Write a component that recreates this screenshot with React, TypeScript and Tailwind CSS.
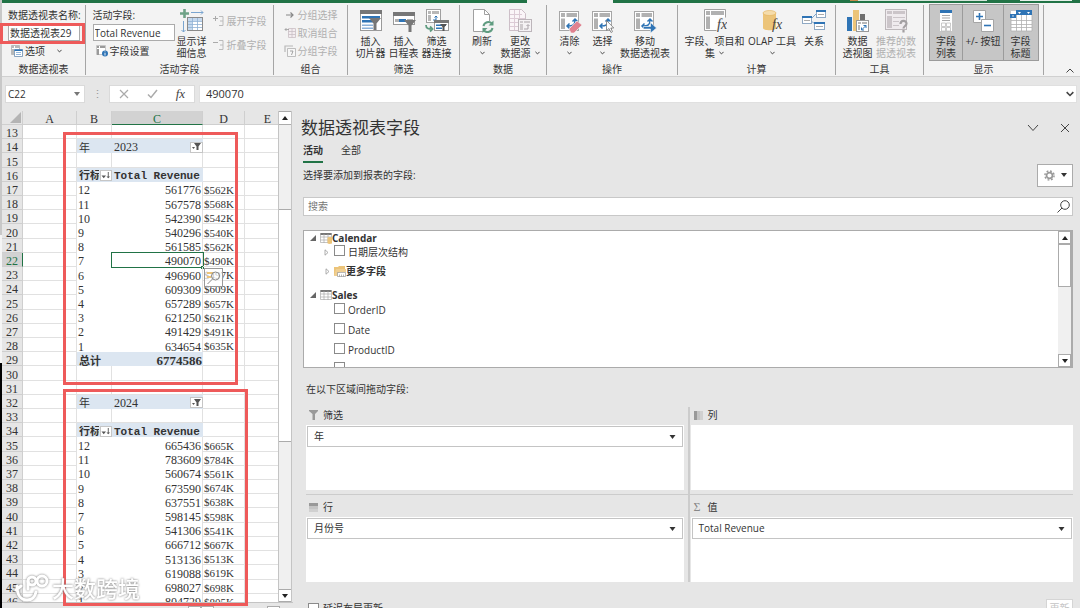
import React from 'react';

interface IconProps {
	className?: string;
}

interface BigButtonProps {
	icon: React.ReactNode;
	lines: string[];
	width: string;
	menu?: boolean;
	disabled?: boolean;
	pressed?: boolean;
}

interface PivotItem {
	month: string;
	total: string;
	short: string;
}

const pivot2023: PivotItem[] = [
	{ month: '12', total: '561776', short: '$562K' },
	{ month: '11', total: '567578', short: '$568K' },
	{ month: '10', total: '542390', short: '$542K' },
	{ month: '9', total: '540296', short: '$540K' },
	{ month: '8', total: '561585', short: '$562K' },
	{ month: '7', total: '490070', short: '$490K' },
	{ month: '6', total: '496960', short: '$497K' },
	{ month: '5', total: '609309', short: '$609K' },
	{ month: '4', total: '657289', short: '$657K' },
	{ month: '3', total: '621250', short: '$621K' },
	{ month: '2', total: '491429', short: '$491K' },
	{ month: '1', total: '634654', short: '$635K' },
];

const pivot2024: PivotItem[] = [
	{ month: '12', total: '665436', short: '$665K' },
	{ month: '11', total: '783609', short: '$784K' },
	{ month: '10', total: '560674', short: '$561K' },
	{ month: '9', total: '673590', short: '$674K' },
	{ month: '8', total: '637551', short: '$638K' },
	{ month: '7', total: '598145', short: '$598K' },
	{ month: '6', total: '541306', short: '$541K' },
	{ month: '5', total: '666712', short: '$667K' },
	{ month: '4', total: '513136', short: '$513K' },
	{ month: '3', total: '619088', short: '$619K' },
	{ month: '2', total: '698027', short: '$698K' },
	{ month: '1', total: '804729', short: '$805K' },
];

/* ---------- icons ---------- */

const Chevron: React.FC<IconProps> = ({ className }) => (
	<svg className={className ?? 'w-[5px] h-[4px]'} viewBox="0 0 6 4" fill="none" stroke="#444" strokeWidth="1.2">
		<path d="M.5 .6 3 3.1 5.5 .6" />
	</svg>
);

const Caret: React.FC<IconProps> = ({ className }) => (
	<svg className={className ?? 'w-[6px] h-[4px]'} viewBox="0 0 6 4" fill="currentColor">
		<path d="M0 0h6L3 4z" />
	</svg>
);

const CaretUp: React.FC = () => (
	<svg className="w-[6px] h-[4px]" viewBox="0 0 6 4" fill="#222">
		<path d="M0 4h6L3 0z" />
	</svg>
);

const PivotBase: React.FC = () => (
	<g>
		<rect x="1.5" y="2.5" width="19" height="19" fill="#fff" stroke="#a6a6a6" />
		<path d="M3 4h4v4H3zM8.500 4H19v4H8.500zM3 9.500h4V20H3z" fill="#b1b1b1" />
		<path d="M10 17c5 0 7-1 7-6M14.500 12.500 17 10l2.500 2.500M11.500 14.500 9 17l2.500 2.500" fill="none" stroke="#2f74b5" strokeWidth="1.500" />
	</g>
);

const Funnel: React.FC<{ x: number; y: number }> = ({ x, y }) => (
	<path transform={`translate(${x} ${y})`} d="M0 0h12L7.500 5.500V12h-3V5.500z" fill="#777" />
);

const BigSvg: React.FC<{ children: React.ReactNode }> = ({ children }) => (
	<svg className="w-[24px] h-[24px]" viewBox="0 0 24 24">
		{children}
	</svg>
);

const ShowDetailIcon = () => (
	<BigSvg>
		<path d="M4.500 0v9M0 4.500h9" stroke="#6fa287" strokeWidth="2.600" />
		<path d="M11 3.500h12M21 1.500l2 2-2 2M3.500 12v11M1.500 21l2 2 2-2" stroke="#7aa5d0" fill="none" />
		<rect x="7.500" y="8.500" width="15" height="13" fill="#fff" stroke="#8a8a8a" />
		<path d="M8 9h4v12H8zM8 9h14v3H8z" fill="#c5d9ee" />
		<path d="M12.500 9v12M17.500 9v12M8 12.500h14M8 15.500h14M8 18.500h14" stroke="#8fb1d4" strokeWidth=".8" />
	</BigSvg>
);

const SlicerIcon = () => (
	<BigSvg>
		<rect x="1.500" y="1.500" width="21" height="20" fill="#fff" stroke="#9a9a9a" />
		<path d="M1 1h22v4H1z" fill="#777" />
		<path d="M3 7h18v2.500H3zM3 11h12v2.500H3z" fill="#2f74b5" />
		<path d="M3 15.500h11v1.500H3zM3 18.500h11v1.500H3z" fill="#8ab0d8" />
		<Funnel x={10} y={9} />
	</BigSvg>
);

const TimelineIcon = () => (
	<BigSvg>
		<rect x="1.500" y="3.500" width="21" height="12" fill="#fff" stroke="#9a9a9a" />
		<path d="M1 3h22v4H1z" fill="#777" />
		<path d="M3 10h4v3H3zM15 10h6v2h-6z" fill="#b1b1b1" />
		<path d="M7 10h7v3H7z" fill="#2f74b5" />
		<Funnel x={12} y={11} />
	</BigSvg>
);

const FilterLinkIcon = () => (
	<BigSvg>
		<rect x="1.500" y=".5" width="14" height="13" fill="#fff" stroke="#a0a0a0" />
		<path d="M3 2h3v3H3zM7 2h7v3H7zM3 6h3v6H3z" fill="#b8b8b8" />
		<path d="M8 11h3V7M9.500 8.500 11 7l1.500 1.500" stroke="#2f74b5" fill="none" />
		<rect x="9.500" y="11.500" width="14" height="10" fill="#fff" stroke="#9a9a9a" />
		<path d="M9 11h15v3H9z" fill="#777" />
		<path d="M11 15.500h10v1.500H11zM11 18.500h6v1.500h-6z" fill="#2f74b5" />
		<path d="M15 15h7l-2.500 3v4h-2v-4z" fill="#555" />
		<path d="M1 16c0 4 3 4 6 4M5 17.500 7.500 20 5 22.500" stroke="#5f9c80" strokeWidth="1.800" fill="none" />
	</BigSvg>
);

const RefreshIcon = () => (
	<BigSvg>
		<path d="M3.500 .5h11l5 5v17h-16z" fill="#fff" stroke="#a0a0a0" />
		<path d="M14.500 .5v5h5" fill="none" stroke="#a0a0a0" />
		<circle cx="18" cy="18" r="6" fill="#f3f3f3" />
		<path d="M13.500 17a5 5 0 0 1 8.500-2.500M22.500 19a5 5 0 0 1-8.500 2.500" stroke="#5f9c80" strokeWidth="2" fill="none" />
		<path d="M23.500 11.500v5h-5zM12.500 24v-5h5z" fill="#5f9c80" />
	</BigSvg>
);

const ChangeSourceIcon = () => (
	<BigSvg>
		<path d="M1.500 .5h12l4 4v17h-16z" fill="#faf5f8" stroke="#cdbfc8" />
		<path d="M2 5.500h12M2 9.500h15M2 13.500h12M2 17.500h12M6.500 1v20M11.500 1v20" stroke="#dccbd6" />
		<rect x="10.500" y="10.500" width="13" height="12" fill="#f5f2f4" stroke="#bcb5ba" />
		<path d="M12 12h3v2h-3zM16 12h6v2h-6zM12 15h3v6h-3z" fill="#cfcacd" />
		<path d="M16 20h4v-4M18.500 17l1.500-1.500 1.500 1.500" stroke="#a9a2a8" fill="none" />
	</BigSvg>
);

const ClearIcon = () => (
	<BigSvg>
		<PivotBase />
		<path d="m11 20 8-8 5 4-8 8h-3z" fill="#e0818f" stroke="#f3f3f3" strokeWidth=".6" />
	</BigSvg>
);

const SelectIcon = () => (
	<BigSvg>
		<PivotBase />
		<path d="M15.500 11.500v10l2.500-2 2 4 1.500-.8-1.700-3.700h3z" fill="#fff" stroke="#777" strokeWidth=".8" />
	</BigSvg>
);

const MoveIcon = () => (
	<BigSvg>
		<PivotBase />
		<path d="M10.500 17.500h7v-4l6 5.500-6 5v-4h-7z" fill="#2f74b5" stroke="#f3f3f3" strokeWidth=".6" />
	</BigSvg>
);

const FxMark: React.FC<{ x: number }> = ({ x }) => (
	<text x={x} y="20" fontFamily="Liberation Serif, serif" fontStyle="italic" fontSize="14" fill="#444">
		fx
	</text>
);

const FieldsIcon = () => (
	<BigSvg>
		<path d="M1.500 .5h21v21h-21z" fill="#fff" stroke="#a0a0a0" />
		<path d="M3 2h4v4H3zM8 2h13v4H8zM3 7.500h4V20H3z" fill="#b1b1b1" />
		<path d="M16 8.500h8V24h-11z" fill="#f3f3f3" />
		<FxMark x={14} />
	</BigSvg>
);

const OlapIcon = () => (
	<BigSvg>
		<path d="M3 4v15c0 3 13 3 13 0V4z" fill="#ecc479" />
		<ellipse cx="9.500" cy="4" rx="6.500" ry="2.500" fill="#f5dcab" stroke="#e3b25a" strokeWidth=".6" />
		<FxMark x={12} />
	</BigSvg>
);

const RelationIcon = () => (
	<BigSvg>
		<path d="M9 10 15 4M9 12l7 5" stroke="#7aa5d0" fill="none" />
		<g fill="#fff" stroke="#8fa9c4">
			<rect x=".5" y="7.500" width="9" height="7" />
			<rect x="14.500" y="1.500" width="9" height="7" />
			<rect x="12.500" y="13.500" width="10" height="7" />
		</g>
		<path d="M0 7h10v2H0zM14 1h10v2H14zM12 13h11v2H12z" fill="#2f74b5" />
		<path d="M2 11.500h6M16 5.500h6M14 17.500h7" stroke="#aaa" />
	</BigSvg>
);

const PivotChartIcon = () => (
	<BigSvg>
		<path d="M1 8h5v14H1z" fill="#2f74b5" />
		<path d="M7 1h6v21H7z" fill="#ecc479" />
		<path d="M14 5h5v7h-5z" fill="#6f6f6f" />
		<rect x="10.500" y="11.500" width="12" height="11" fill="#fff" stroke="#999" />
		<path d="M12 13h3v2h-3zM16 13h5v2h-5zM12 16h2v5h-2z" fill="#b8b8b8" />
		<path d="M15.500 21 20 16.500M17.500 16.500H20V19M15.500 18.500V21H18" stroke="#2f74b5" fill="none" />
	</BigSvg>
);

const RecommendIcon = () => (
	<BigSvg>
		<rect x="1.500" y=".5" width="21" height="20" fill="#efebee" stroke="#bdb8bb" />
		<path d="M3 2h5v3H3zM9 2h12v3H9zM3 7h5v12H3z" fill="#cbc5c9" />
		<path d="M9 8.500h12M9 12.500h6M9 16.500h6" stroke="#cbc5c9" />
		<path d="M16.500 15c0-4 6-4 6-.5 0 2.500-3 2.500-3 5M19.500 21v2.500" stroke="#a3a0a2" strokeWidth="2.200" fill="none" />
	</BigSvg>
);

const FieldListIcon = () => (
	<BigSvg>
		<path d="M6 1h12v21H6z" fill="#fff" />
		<path d="M6 1h12v3H6z" fill="#2f74b5" />
		<path d="M8 6h8v1H8zM8 8.500h8v1H8zM8 11h8v1H8z" fill="#aaa" />
		<path d="M7.500 14h4v3.500h-4zM12.500 14h4v3.500h-4zM7.500 18.500h4V22h-4zM12.500 18.500h4V22h-4z" fill="none" stroke="#b5b5b5" strokeWidth=".7" />
	</BigSvg>
);

const PlusMinusIcon = () => (
	<BigSvg>
		<path d="M2.500 1.500h12v12h-12z" fill="#fff" stroke="#a5a5a5" />
		<path d="M8.500 4v7M5 7.500h7" stroke="#2f74b5" strokeWidth="1.600" />
		<path d="M10.500 10.500h12v12h-12z" fill="#fff" stroke="#a5a5a5" />
		<path d="M13 16.500h7" stroke="#2f74b5" strokeWidth="1.600" />
	</BigSvg>
);

const HeadersIcon = () => (
	<BigSvg>
		<path d="M2 2h21v20H2z" fill="#fff" />
		<path d="M2 8v14h21V5M7.500 2v20M12.500 5v17M17.500 5v17M2 11.500h21M2 15.500h21M2 18.500h21" stroke="#b0b0b0" fill="none" strokeWidth=".8" />
		<path d="M7 1h16v5H7zM1 5h6v4H1z" fill="#2f74b5" />
		<path d="m9 3 1.500 2L12 3zM18 3l1.500 2L21 3zM3 6.500 4 8l1-1.500z" fill="#fff" />
	</BigSvg>
);

const SmallSvg: React.FC<{ children: React.ReactNode }> = ({ children }) => (
	<svg className="w-[12px] h-[12px] shrink-0" viewBox="0 0 12 12">
		{children}
	</svg>
);

const OptionsIcon = () => (
	<SmallSvg>
		<path d="M.5 .5h8v9h-8z" fill="#fff" stroke="#aaa" strokeWidth=".8" />
		<path d="M1 1h2v2H1zM4 1h4v2H4zM1 4h2v5H1z" fill="#b8b8b8" />
		<path d="M3.500 4.500h8v7h-8z" fill="#fff" stroke="#6b8db0" strokeWidth=".8" />
		<path d="M3.500 4.500h8V6h-8z" fill="#2f74b5" />
		<path d="M5 7.500h5M5 9.500h5" stroke="#7aa5d0" strokeWidth=".8" />
	</SmallSvg>
);

const FieldSettingsIcon = () => (
	<SmallSvg>
		<path d="M.5 .5h9v9h-9z" fill="#fff" stroke="#bbb" strokeWidth=".8" />
		<path d="M1 1h2v2H1zM4 1h5v2H4zM1 4h2v6H1z" fill="#9a9a9a" />
		<circle cx="9" cy="8.500" r="3" fill="#2f74b5" />
		<path d="M9 8v2.500M9 6.500v.8" stroke="#fff" strokeWidth=".9" />
	</SmallSvg>
);

const ExpandIcon = ({ plus }: { plus: boolean }) => (
	<SmallSvg>
		<path d={plus ? 'M0 3.500h5M2.500 1v5' : 'M0 3.500h5'} stroke="#aaa" fill="none" />
		<path d="M6 1.500h4v9H6M7 6h3" stroke="#bbb" fill="none" />
	</SmallSvg>
);

const GroupArrowIcon = () => (
	<SmallSvg>
		<path d="M2 6h7M6.500 3.500 9 6 6.500 8.500" stroke="#888" strokeWidth="1.200" fill="none" />
	</SmallSvg>
);

const UngroupIcon = () => (
	<SmallSvg>
		<path d="M4.500 1.500h7v9h-7zM8 1.500v9M4.500 4.500h7M4.500 7.500h7" stroke="#c9bfc5" fill="#f3edf0" strokeWidth=".8" />
		<path d="M5 2.500H1M2.500 1 1 2.500 2.500 4" stroke="#999" fill="none" strokeWidth=".8" />
	</SmallSvg>
);

const GroupFieldIcon = () => (
	<SmallSvg>
		<path d="M1 7V1h8" stroke="#b8b8b8" fill="none" strokeWidth="1.200" />
		<path d="M3.500 3.500h8v8h-8z" fill="#f7f7f7" stroke="#b0b0b0" strokeWidth=".8" />
		<path d="M6 6h3L7.500 10" stroke="#999" fill="none" strokeWidth=".9" />
	</SmallSvg>
);

const TableIcon = ({ db }: { db?: boolean }) => (
	<SmallSvg>
		<path d="M.5 1.500h11v9H.5z" fill="#fff" stroke="#aaa" strokeWidth=".7" />
		<path d="M.5 1h11v2H.5z" fill="#777" />
		<path d="M.5 5h11M.5 8h11M4 2v9M8 2v9" stroke="#aaa" strokeWidth=".7" />
		{db && <path d="M7.500 6c0-1.500 4.500-1.500 4.500 0v5c0 1.200-4.500 1.200-4.500 0z" fill="#ecc479" />}
	</SmallSvg>
);

const FolderIcon = () => (
	<SmallSvg>
		<path d="M0 11V2h4l1-1h6v3" fill="#ecc479" />
		<path d="M0 11 2 4h10v3H4v4z" fill="#f0cf92" />
		<path d="M3.500 7.500h8v4h-8zM5.500 9.500v2M7.500 9.500v2M9.500 9.500v2" fill="#fff" stroke="#888" strokeWidth=".6" />
	</SmallSvg>
);

/* ---------- ribbon ---------- */

const BigButton: React.FC<BigButtonProps> = ({ icon, lines, width, menu, disabled, pressed }) => {
	return (
		<button
			disabled={disabled}
			className={`${width} shrink-0 h-[55px] pt-[4px] flex flex-col items-center leading-[12px] whitespace-nowrap ${
				disabled ? 'text-[#b0b0b0]' : ''
			} ${pressed ? 'bg-[#c6c6c6] outline-1 outline-[#9b9b9b]' : ''}`}
		>
			{icon}
			<span className="mt-[2px]">{lines[0]}</span>
			<span className="flex items-center gap-1 h-[12px]">
				{lines[1]}
				{menu && <Chevron />}
			</span>
		</button>
	);
};

const SmallButton: React.FC<{ icon: React.ReactNode; text: string; disabled?: boolean; menu?: boolean }> = (props) => {
	return (
		<button
			disabled={props.disabled}
			className={`flex items-center gap-[2px] h-[14px] leading-[14px] whitespace-nowrap ${props.disabled ? 'text-[#b0b0b0]' : ''}`}
		>
			{props.icon}
			{props.text}
			{props.menu && <Chevron className="w-[5px] h-[4px] ml-[10px]" />}
		</button>
	);
};

const RibbonGroup: React.FC<{ width: string; title: string; children: React.ReactNode }> = (props) => {
	return (
		<section className={`${props.width} shrink-0 h-[70px] flex flex-col border-r border-[#a5a5a5]`}>
			<div className="h-[58px] shrink-0 flex justify-center">{props.children}</div>
			<h2 className="text-center leading-[12px]">{props.title}</h2>
		</section>
	);
};

const Ribbon = () => (
	<div className="relative flex h-[74px] pt-[2px] bg-[#f3f3f3] border-b border-[#d0d0d0]">
		<RibbonGroup width="w-[84px]" title="数据透视表">
			<div className="w-full pl-[6px] pt-[3px] flex flex-col items-start">
				<label htmlFor="pivot-name" className="leading-[14px] whitespace-nowrap">数据透视表名称:</label>
				<input id="pivot-name" className="w-[72px] h-[17px] mt-[2px] mb-[3px] px-px bg-white border border-[#ababab]" defaultValue="数据透视表29" />
				<div className="pl-[3px]">
					<SmallButton icon={<OptionsIcon />} text="选项" menu />
				</div>
			</div>
		</RibbonGroup>
		<RibbonGroup width="w-[188px]" title="活动字段">
			<div className="pt-[3px] flex flex-col items-start">
				<label htmlFor="active-field" className="leading-[14px]">活动字段:</label>
				<input id="active-field" className="w-[82px] h-[17px] mt-[2px] mb-[3px] px-px bg-white border border-[#ababab]" defaultValue="Total Revenue" />
				<div className="pl-[3px]">
					<SmallButton icon={<FieldSettingsIcon />} text="字段设置" />
				</div>
			</div>
			<BigButton width="w-[34px]" icon={<ShowDetailIcon />} lines={['显示详', '细信息']} />
			<div className="pl-[4px] pt-[9px] flex flex-col gap-[10px]">
				<SmallButton icon={<ExpandIcon plus />} text="展开字段" disabled />
				<SmallButton icon={<ExpandIcon plus={false} />} text="折叠字段" disabled />
			</div>
		</RibbonGroup>
		<RibbonGroup width="w-[74px]" title="组合">
			<div className="pt-[3px] flex flex-col gap-[4px]">
				<SmallButton icon={<GroupArrowIcon />} text="分组选择" disabled />
				<SmallButton icon={<UngroupIcon />} text="取消组合" disabled />
				<SmallButton icon={<GroupFieldIcon />} text="分组字段" disabled />
			</div>
		</RibbonGroup>
		<RibbonGroup width="w-[112px]" title="筛选">
			<BigButton width="w-[33px]" icon={<SlicerIcon />} lines={['插入', '切片器']} />
			<BigButton width="w-[33px]" icon={<TimelineIcon />} lines={['插入', '日程表']} />
			<BigButton width="w-[33px]" icon={<FilterLinkIcon />} lines={['筛选', '器连接']} />
		</RibbonGroup>
		<RibbonGroup width="w-[87px]" title="数据">
			<BigButton width="w-[34px]" icon={<RefreshIcon />} lines={['刷新', '']} menu />
			<BigButton width="w-[42px]" icon={<ChangeSourceIcon />} lines={['更改', '数据源']} menu />
		</RibbonGroup>
		<RibbonGroup width="w-[131px]" title="操作">
			<BigButton width="w-[33px]" icon={<ClearIcon />} lines={['清除', '']} menu />
			<BigButton width="w-[33px]" icon={<SelectIcon />} lines={['选择', '']} menu />
			<BigButton width="w-[52px]" icon={<MoveIcon />} lines={['移动', '数据透视表']} />
		</RibbonGroup>
		<RibbonGroup width="w-[158px]" title="计算">
			<BigButton width="w-[61px]" icon={<FieldsIcon />} lines={['字段、项目和', '集']} menu />
			<BigButton width="w-[54px]" icon={<OlapIcon />} lines={['OLAP 工具', '']} menu />
			<BigButton width="w-[30px]" icon={<RelationIcon />} lines={['关系', '']} />
		</RibbonGroup>
		<RibbonGroup width="w-[88px]" title="工具">
			<BigButton width="w-[33px]" icon={<PivotChartIcon />} lines={['数据', '透视图']} />
			<BigButton width="w-[44px]" icon={<RecommendIcon />} lines={['推荐的数', '据透视表']} disabled />
		</RibbonGroup>
		<RibbonGroup width="w-[120px]" title="显示">
			<BigButton width="w-[33px]" icon={<FieldListIcon />} lines={['字段', '列表']} pressed />
			<BigButton width="w-[41px]" icon={<PlusMinusIcon />} lines={['+/- 按钮', '']} pressed />
			<BigButton width="w-[34px]" icon={<HeadersIcon />} lines={['字段', '标题']} pressed />
		</RibbonGroup>
		<button aria-label="折叠功能区" className="ml-auto mr-[6px] self-end pb-[3px]">
			<svg className="w-[8px] h-[5px]" viewBox="0 0 8 5" fill="none" stroke="#444">
				<path d="M.5 4.500 4 1l3.500 3.500" />
			</svg>
		</button>
		<div className="absolute -left-[2px] top-[20px] w-[85px] h-[21px] border-3 border-[#ee5a5a]" />
	</div>
);

const FormulaBar = () => (
	<div className="flex items-center h-[34px] px-[3px] bg-[#e6e6e6] text-[11px]">
		<div className="flex items-center w-[80px] h-[18px] bg-white border border-[#dadada] pr-[4px]">
			<input aria-label="名称框" className="w-full pl-[2px] text-[10px]" defaultValue="C22" />
			<button aria-label="名称列表" className="text-[#777]"><Caret /></button>
		</div>
		<span className="w-[24px] text-center text-[#999]">⋮</span>
		<div className="flex items-center justify-around w-[86px] h-[18px] bg-white border border-[#dadada]">
			<button aria-label="取消">
				<svg className="w-[10px] h-[10px]" viewBox="0 0 10 10" stroke="#aaa" strokeWidth="1.200">
					<path d="m1 1 8 8M9 1 1 9" />
				</svg>
			</button>
			<button aria-label="输入">
				<svg className="w-[11px] h-[10px]" viewBox="0 0 11 10" fill="none" stroke="#aaa" strokeWidth="1.500">
					<path d="m1 5.500 3 3L10 1" />
				</svg>
			</button>
			<button className="font-['Liberation_Serif',serif] italic text-[13px] leading-[16px] text-[#444]">fx</button>
		</div>
		<div className="flex items-center flex-1 h-[18px] ml-[4px] pl-[6px] pr-[2px] bg-white border border-[#e0e0e0]">
			<input aria-label="编辑栏" className="flex-1" defaultValue="490070" />
			<button aria-label="展开编辑栏"><Chevron className="w-[8px] h-[6px]" /></button>
		</div>
	</div>
);

/* ---------- worksheet ---------- */

const cell = 'px-0 pt-[3px] pb-0 border-b border-r border-[#e1e1e1]';
const bare = 'px-0 pt-[3px] pb-0';
const band = 'px-0 pt-[3px] pb-0 bg-[#dce6f1]';
const bandWithButton = 'px-0 pt-[2px] pb-0 bg-[#dce6f1]';

const RowHead: React.FC<{ n: number }> = ({ n }) => (
	<th
		scope="row"
		className={`px-0 pt-[3px] pb-0 font-normal border-b border-r ${
			n === 22 ? 'bg-[#d2d2d2] text-[#217346] border-b-[#cfcfcf] border-r-[#217346]' : 'bg-[#e6e6e6] border-[#cfcfcf]'
		}`}
	>
		{n}
	</th>
);

const PivotRows: React.FC<{ year: string; start: number; items: PivotItem[] }> = ({ year, start, items }) => {
	return (
		<>
			<tr>
				<RowHead n={start} />
				<td className={cell} />
				<td className={`${band} pl-[2px] text-[11px]`}>年</td>
				<td className={bandWithButton}>
					<div className="flex items-center justify-between pl-[2px]">
						{year}
						<button aria-label="筛选年份" className="w-[13px] h-[11px] flex items-center justify-center bg-white border border-[#c6c6c6]">
							<svg className="w-[9px] h-[8px]" viewBox="0 0 9 8" fill="#555">
								<path d="M2 0h7L6.500 3.500V7h-2V3.500zM0 4h3L1.500 6z" />
							</svg>
						</button>
					</div>
				</td>
				<td className={cell} />
				<td className={cell} />
			</tr>
			<tr>
				<RowHead n={start + 1} />
				<td className={cell} />
				<td className={cell} />
				<td className={cell} />
				<td className={cell} />
				<td className={cell} />
			</tr>
			<tr>
				<RowHead n={start + 2} />
				<td className={cell} />
				<td className={`${bandWithButton} font-bold text-[11px]`}>
					<div className="flex items-center justify-between pl-[2px] leading-[11px] whitespace-nowrap">
						<span className="w-[20px] overflow-hidden">行标签</span>
						<button aria-label="行标签排序" className="w-[12px] h-[11px] bg-white border border-[#c6c6c6]">
							<svg className="w-[10px] h-[9px]" viewBox="0 0 10 10" fill="#555">
								<path d="M0 5h5L2.500 8zM7 1h1v5h1.500l-2 2-2-2H7z" />
							</svg>
						</button>
					</div>
				</td>
				<td className={`${band} pl-[2px] font-bold text-[11px] whitespace-nowrap font-['Liberation_Mono',monospace]`}>Total Revenue</td>
				<td className={cell} />
				<td className={cell} />
			</tr>
			{items.map((item, i) => {
				const n = start + 3 + i;
				return (
					<tr key={n}>
						<RowHead n={n} />
						<td className={cell} />
						<td className={`${bare} pl-px`}>{item.month}</td>
						<td
							className={`${bare} relative border-r border-[#e1e1e1] pr-px text-right ${
								n === 22 ? 'outline-1 outline-[#217346]' : ''
							}`}
						>
							{item.total}
							{n === 22 && <span className="absolute -right-[2px] -bottom-[2px] w-[3px] h-[3px] bg-[#217346]" />}
						</td>
						<td className={`${cell} relative pl-px text-[11px]`}>
							{item.short}
							{n === 22 && (
								<button
									aria-label="快速分析"
									className="absolute z-10 left-[1px] top-[15px] w-[19px] h-[19px] flex items-center justify-center bg-white/70 border border-[#999]"
								>
									<svg className="w-[15px] h-[15px]" viewBox="0 0 15 15" fill="none" stroke="#888">
										<path d="M1 3h6M1 7h4" stroke="#ecc479" strokeWidth="2" />
										<circle cx="9.500" cy="6" r="4" />
										<path d="m6.500 9-5 5" />
									</svg>
								</button>
							)}
						</td>
						<td className={cell} />
					</tr>
				);
			})}
		</>
	);
};

const Sheet = () => (
	<div className="relative w-[276px] h-[491px] overflow-hidden bg-white">
		<table className="table-fixed w-[289px] h-[497px] border-separate border-spacing-0 text-[12px] leading-[10px] text-[#333] font-['Liberation_Serif','Noto_Sans_CJK_SC',serif]">
			<colgroup>
				<col className="w-[21px]" />
				<col className="w-[54px]" />
				<col className="w-[35px]" />
				<col className="w-[91px]" />
				<col className="w-[42px]" />
				<col className="w-[46px]" />
			</colgroup>
			<thead>
				<tr className="bg-[#e6e6e6]">
					<td className="p-0 border-b border-r border-[#cfcfcf]">
						<svg className="ml-auto mr-px w-[11px] h-[11px]" viewBox="0 0 11 11" fill="#b4b4b4">
							<path d="M11 0v11H0z" />
						</svg>
					</td>
					{['A', 'B', 'C', 'D', 'E'].map((name) => (
						<th
							key={name}
							scope="col"
							className={`px-0 pt-[3px] pb-0 font-normal border-b border-r border-[#cfcfcf] ${
								name === 'C' ? 'bg-[#d2d2d2] text-[#217346] border-b-[#217346]' : ''
							}`}
						>
							{name}
						</th>
					))}
				</tr>
			</thead>
			<tbody>
				<tr>
					<RowHead n={13} />
					<td className={cell} />
					<td className={cell} />
					<td className={cell} />
					<td className={cell} />
					<td className={cell} />
				</tr>
				<PivotRows year="2023" start={14} items={pivot2023} />
				<tr>
					<RowHead n={29} />
					<td className={cell} />
					<td className={`${band} pl-[2px] font-bold text-[11px]`}>总计</td>
					<td className={`${band} pr-px font-bold text-[13px] text-right`}>6774586</td>
					<td className={cell} />
					<td className={cell} />
				</tr>
				{[30, 31].map((n) => (
					<tr key={n}>
						<RowHead n={n} />
						<td className={cell} />
						<td className={cell} />
						<td className={cell} />
						<td className={cell} />
						<td className={cell} />
					</tr>
				))}
				<PivotRows year="2024" start={32} items={pivot2024} />
			</tbody>
		</table>
	</div>
);

const Watermark = () => (
	<div className="absolute left-[12px] top-[462px] z-20 flex items-center gap-[2px] drop-shadow-[0_0_1px_#777]">
		<svg className="w-[36px] h-[30px]" viewBox="0 0 36 30" fill="none" stroke="#fff" strokeWidth="3" strokeLinecap="round">
			<path d="M3 13c0 9 4 14 10 14 5 0 8-3 9-8M2 17l5-4" />
			<circle cx="18" cy="8" r="4" />
			<circle cx="28" cy="8" r="5" />
			<path d="M14 8v8" />
		</svg>
		<span className="text-[22px] leading-[30px] font-medium text-white">大数跨境</span>
	</div>
);

const Workbook = () => (
	<div className="relative w-[291px] shrink-0 h-full flex flex-col">
		<div className="flex">
			<Sheet />
			<div className="w-[14px] h-[491px] flex flex-col bg-[#f0f0f0] border-x border-[#c4c4c4]">
				<button aria-label="向上滚动" className="h-[14px] flex items-center justify-center bg-white border-y border-[#ababab]"><CaretUp /></button>
				<div className="h-[84px]" />
				<div className="h-[233px] bg-white border-y border-[#ababab]" />
				<button aria-label="向下滚动" className="mt-auto h-[13px] flex items-center justify-center bg-white border-y border-[#ababab] text-[#222]"><Caret /></button>
			</div>
		</div>
		<div className="flex-1 flex border-t border-[#c4c4c4] pt-[3px]">
			<div className="ml-[186px] w-[13px] bg-white border border-b-0 border-[#ababab]" />
			<div className="w-[13px] bg-white border border-b-0 border-[#ababab]" />
			<div className="ml-auto mr-[13px] w-[13px] bg-white border border-b-0 border-[#ababab]" />
		</div>
		<Watermark />
		<div className="absolute z-10 left-[61px] top-[21px] w-[175px] h-[253px] border-3 border-[#ee5a5a]" />
		<div className="absolute z-10 left-[61px] top-[278px] w-[185px] h-[217px] border-3 border-[#ee5a5a]" />
	</div>
);

/* ---------- field pane ---------- */

const FieldCheck: React.FC<{ name: string; toggle?: boolean }> = ({ name, toggle }) => (
	<label className={`flex items-center pl-[20px] ${toggle ? 'h-[15px]' : 'h-[20px]'}`}>
		<span className="w-[10px]">
			{toggle && <TreeClosed />}
		</span>
		<input type="checkbox" className="appearance-none w-[11px] h-[11px] mr-[3px] mb-[4px] bg-white border border-[#8a8a8a]" />
		{name}
	</label>
);

const TreeOpen = () => (
	<svg className="w-[6px] h-[6px] mr-[4px]" viewBox="0 0 6 6" fill="#666">
		<path d="M6 0v6H0z" />
	</svg>
);

const TreeClosed = () => (
	<svg className="w-[5px] h-[7px] mr-[4px]" viewBox="0 0 5 7" fill="none" stroke="#999" strokeWidth=".8">
		<path d="M1 .8v5.400L4 3.500z" />
	</svg>
);

const FieldTree = () => (
	<div className="flex h-[138px] mt-[14px] mr-[7px] bg-white border border-r-2 border-[#ababab]">
		<div className="flex-1 overflow-hidden">
			<div className="flex items-center h-[14px] pl-[6px] font-bold"><TreeOpen /><TableIcon db />Calendar</div>
			<FieldCheck name="日期层次结构" toggle />
			<div className="flex items-center h-[22px] pl-[21px] font-bold"><TreeClosed /><FolderIcon />更多字段</div>
			<div className="flex items-center h-[14px] mt-[6px] pl-[6px] font-bold"><TreeOpen /><TableIcon />Sales</div>
			<div className="-mt-[2px]">
				<FieldCheck name="OrderID" />
				<FieldCheck name="Date" />
				<FieldCheck name="ProductID" />
			</div>
			<div className="pl-[30px] pt-[2px]">
				<input aria-label="下一个字段" type="checkbox" className="block appearance-none w-[11px] h-[11px] bg-white border border-[#8a8a8a]" />
			</div>
		</div>
		<div className="w-[13px] flex flex-col bg-[#f0f0f0]">
			<button aria-label="向上滚动" className="h-[13px] flex items-center justify-center bg-white border border-[#ababab]"><CaretUp /></button>
			<div className="h-[43px] bg-white border border-[#ababab]" />
			<button aria-label="向下滚动" className="mt-auto h-[13px] flex items-center justify-center bg-white border border-[#ababab] text-[#222]"><Caret /></button>
		</div>
	</div>
);

const Zone: React.FC<{ icon: React.ReactNode; title: string; field?: string }> = ({ icon, title, field }) => {
	return (
		<div>
			<h3 className="flex items-center gap-[5px] h-[18px] pl-[3px] pb-[2px]">
				{icon}
				{title}
			</h3>
			<div className="h-[65px] p-px bg-white">
				{field && (
					<button className="flex items-center justify-between w-full h-[21px] px-[6px] border border-[#c4c4c4] text-left">
						{field}
						<Caret className="w-[7px] h-[4px]" />
					</button>
				)}
			</div>
		</div>
	);
};

const ZoneFilterIcon = () => (
	<svg className="w-[9px] h-[10px]" viewBox="0 0 9 10" fill="#999"><path d="M0 0h9v1L6 4v6H3.500V4L0 1z" /></svg>
);
const ZoneColumnIcon = () => (
	<svg className="w-[9px] h-[9px]" viewBox="0 0 9 9"><path d="M0 0h3v9H0z" fill="#999" /><path d="M3 0h3v9H3z" fill="#c4c4c4" /><path d="M6 0h3v9H6z" fill="#d0d0d0" /></svg>
);
const ZoneRowIcon = () => (
	<svg className="w-[9px] h-[9px]" viewBox="0 0 9 9"><path d="M0 0h9v3H0z" fill="#999" /><path d="M0 3h9v3H0z" fill="#c4c4c4" /><path d="M0 6h9v3H0z" fill="#d0d0d0" /></svg>
);

const FieldPane = () => (
	<aside className="flex-1 min-w-0 pl-[10px]">
		<div className="flex items-center h-[34px]">
			<h1 className="text-[17px] leading-[24px] -ml-[2px]">数据透视表字段</h1>
			<button aria-label="任务窗格选项" className="ml-auto mr-[21px]">
				<svg className="w-[12px] h-[8px]" viewBox="0 0 12 8" fill="none" stroke="#444"><path d="m1 1 5 5.500L11 1" /></svg>
			</button>
			<button aria-label="关闭" className="mr-[10px]">
				<svg className="w-[10px] h-[10px]" viewBox="0 0 10 10" stroke="#444"><path d="m1 1 8 8M9 1 1 9" /></svg>
			</button>
		</div>
		<div className="flex gap-[18px] h-[18px] leading-[11px]">
			<button className="pb-[5px] font-bold border-b-2 border-[#217346]">活动</button>
			<button className="pb-[5px] border-b-2 border-transparent">全部</button>
		</div>
		<div className="flex items-center justify-between h-[24px] mr-[7px]">
			<label htmlFor="field-search">选择要添加到报表的字段:</label>
			<button aria-label="工具" className="flex items-center justify-center gap-[6px] w-[36px] h-[23px] bg-white border border-[#ababab]">
				<svg className="w-[11px] h-[11px]" viewBox="0 0 12 12" fill="none" stroke="#999">
					<circle cx="6" cy="6" r="3.200" strokeWidth="1.800" />
					<circle cx="6" cy="6" r="5" strokeWidth="1.600" strokeDasharray="2 1.930" />
				</svg>
				<Caret />
			</button>
		</div>
		<div className="flex items-center h-[19px] mt-[10px] mr-[7px] pl-[4px] pr-[2px] bg-white border border-[#c8c8c8]">
			<input id="field-search" placeholder="搜索" className="flex-1 placeholder:text-[#777]" />
			<svg className="w-[13px] h-[13px]" viewBox="0 0 13 13" fill="none" stroke="#444">
				<circle cx="8" cy="5" r="4.300" />
				<path d="M5 8 .5 12.500" />
			</svg>
		</div>
		<FieldTree />
		<p className="mt-[14px] ml-[3px] leading-[14px]">在以下区域间拖动字段:</p>
		<div className="grid grid-cols-2 mt-[11px] ml-[3px] mr-[7px]">
			<div className="pr-[4px] pb-[4px] border-r-2 border-b border-[#cccccc]">
				<Zone icon={<ZoneFilterIcon />} title="筛选" field="年" />
			</div>
			<div className="pl-[1px] pb-[4px] border-b border-[#cccccc]">
				<Zone icon={<ZoneColumnIcon />} title="列" />
			</div>
			<div className="pr-[4px] pt-[4px] border-r-2 border-[#cccccc]">
				<Zone icon={<ZoneRowIcon />} title="行" field="月份号" />
			</div>
			<div className="pl-[1px] pt-[4px]">
				<Zone icon={<span className="w-[9px] font-['Liberation_Serif',serif] text-[12px] text-[#888]">Σ</span>} title="值" field="Total Revenue" />
			</div>
		</div>
		<div className="flex items-start justify-between mt-[17px] ml-[5px] mr-[7px]">
			<label className="flex items-center gap-[4px] pt-[2px] leading-[14px]">
				<input type="checkbox" className="appearance-none w-[11px] h-[11px] bg-white border border-[#8a8a8a]" />
				延迟布局更新
			</label>
			<button disabled className="w-[27px] h-[18px] bg-white border border-[#d5d5d5] text-[#c4c4c4]">更新</button>
		</div>
	</aside>
);

export default function App() {
	return (
		<div className="flex h-screen overflow-hidden bg-[#e6e6e6] text-[10px] text-[#333] font-['Open_Sans','Noto_Sans_CJK_SC',sans-serif]">
			<div className="w-[2px] shrink-0 flex flex-col">
				<div className="h-[235px] bg-[#c8c8c8]" />
				<div className="h-[128px] bg-[#f5f5f5]" />
				<div className="flex-1 bg-black" />
			</div>
			<div className="flex-1 min-w-0 flex flex-col">
				<div className="flex h-[3px] shrink-0 bg-[#217346]">
					<div className="w-[86px] ml-[525px] bg-[#f3f3f3]" />
					<div className="w-[8px] h-px ml-[237px] bg-[#c98a4b]" />
					<div className="w-[129px] h-px bg-[#d5e5db]" />
					<div className="w-[52px] h-px ml-auto mr-[8px] bg-[#e6f0ea]" />
				</div>
				<Ribbon />
				<FormulaBar />
				<div className="flex flex-1 min-h-0">
					<Workbook />
					<FieldPane />
				</div>
			</div>
		</div>
	);
}
